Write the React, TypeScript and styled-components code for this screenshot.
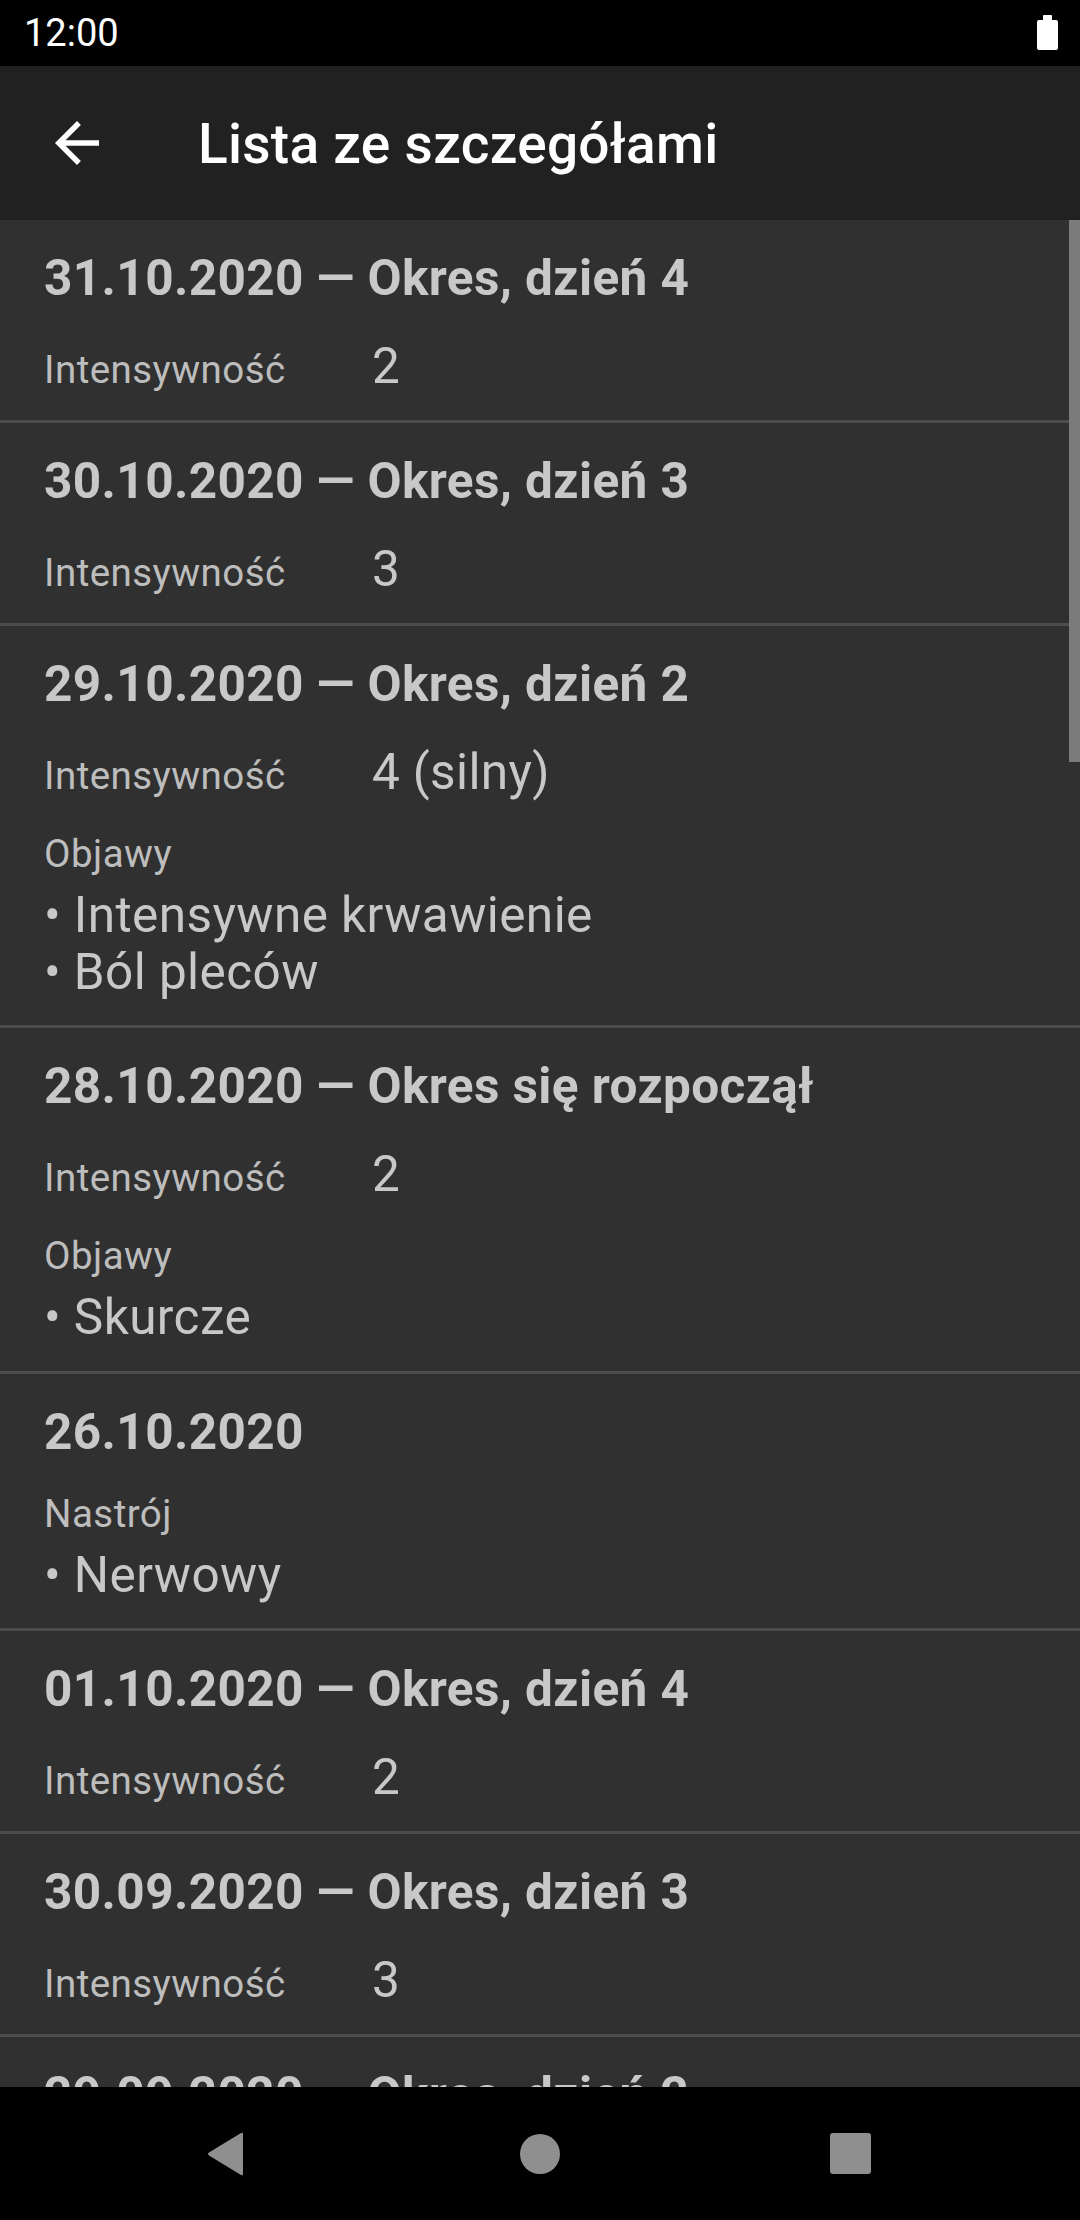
import React from "react";
import styled, { createGlobalStyle } from "styled-components";

const Global = createGlobalStyle`
  html, body { margin: 0; padding: 0; background: #000; }
  body { font-family: Roboto, "Noto Sans", sans-serif; }
  * { box-sizing: border-box; }
`;

const Screen = styled.div`
  width: 1080px;
  height: 2220px;
  display: flex;
  flex-direction: column;
  background: #303030;
  overflow: hidden;
`;

const StatusBar = styled.div`
  height: 66px;
  flex: none;
  background: #000;
  display: flex;
  align-items: center;
  justify-content: space-between;
  padding: 0 22px 0 24px;
  color: #fff;
  font-size: 38px;
  font-family: Roboto, sans-serif;
`;

const Battery = styled.div`
  position: relative;
  width: 21px;
  height: 30px;
  margin-top: 4px;
  background: #fff;
  border-radius: 2px;
  &::before {
    content: "";
    position: absolute;
    top: -5px;
    left: 6px;
    width: 9px;
    height: 5px;
    background: #fff;
    border-radius: 1px 1px 0 0;
  }
`;

const Toolbar = styled.div`
  height: 154px;
  flex: none;
  background: #212121;
  display: flex;
  align-items: center;
  padding-left: 44px;
  gap: 88px;
`;

const ToolbarTitle = styled.h1`
  margin: 0;
  font-family: Roboto, sans-serif;
  font-weight: 500;
  font-size: 55px;
  letter-spacing: 0.28px;
  color: #fff;
  line-height: 64px;
  padding-top: 2px;
`;

const List = styled.div`
  position: relative;
  flex: 1;
  min-height: 0;
  overflow: hidden;
`;

const ScrollThumb = styled.div`
  position: absolute;
  top: 0;
  right: 0;
  width: 11px;
  height: 542px;
  background: #7b7b7b;
`;

const Item = styled.div`
  display: flex;
  flex-direction: column;
  gap: 30px;
  padding: 29px 44px 25px 44px;
  border-bottom: 3px solid #4d4d4d;
`;

const ItemTitle = styled.div`
  font-family: Roboto, sans-serif;
  font-weight: 700;
  font-size: 49.5px;
  letter-spacing: 0.4px;
  line-height: 58px;
  color: #c8c8c8;
  white-space: nowrap;
`;

const Row = styled.div`
  display: flex;
  align-items: baseline;
`;

const Label = styled.div<{ $width?: number }>`
  font-family: Roboto, sans-serif;
  font-size: 38.5px;
  letter-spacing: 0.45px;
  line-height: 45px;
  color: #bdbdbd;
  ${(p) => (p.$width ? `width: ${p.$width}px; flex: none;` : "")}
`;

const Value = styled.div`
  font-family: Roboto, sans-serif;
  font-size: 49.5px;
  letter-spacing: 0.35px;
  line-height: 58px;
  color: #c8c8c8;
`;

const Section = styled.div`
  display: flex;
  flex-direction: column;
`;

const Bullets = styled.ul`
  list-style: none;
  margin: 11px 0 0 0;
  padding: 0;
`;

const Bullet = styled.li`
  font-family: Roboto, sans-serif;
  font-size: 49.5px;
  letter-spacing: 0.42px;
  line-height: 56.5px;
  color: #c8c8c8;
`;

const NavBar = styled.div`
  height: 133px;
  flex: none;
  background: #000;
  display: flex;
  align-items: center;
  justify-content: center;
`;

const NavSlot = styled.div<{ $shift?: number }>`
  width: 310px;
  display: flex;
  justify-content: center;
  align-items: center;
  padding-right: ${(p) => p.$shift ?? 0}px;
`;

const BackArrow = () => (
  <svg width="66" height="66" viewBox="0 0 24 24" fill="#fff">
    <path d="M20 11H7.83l5.59-5.59L12 4l-8 8 8 8 1.41-1.41L7.83 13H20v-2z" />
  </svg>
);

type Entry = {
  title: string;
  intensity?: string;
  sections?: { label: string; items: string[] }[];
};

const entries: Entry[] = [
  { title: "31.10.2020 — Okres, dzień 4", intensity: "2" },
  { title: "30.10.2020 — Okres, dzień 3", intensity: "3" },
  {
    title: "29.10.2020 — Okres, dzień 2",
    intensity: "4 (silny)",
    sections: [{ label: "Objawy", items: ["Intensywne krwawienie", "Ból pleców"] }],
  },
  {
    title: "28.10.2020 — Okres się rozpoczął",
    intensity: "2",
    sections: [{ label: "Objawy", items: ["Skurcze"] }],
  },
  {
    title: "26.10.2020",
    sections: [{ label: "Nastrój", items: ["Nerwowy"] }],
  },
  { title: "01.10.2020 — Okres, dzień 4", intensity: "2" },
  { title: "30.09.2020 — Okres, dzień 3", intensity: "3" },
  { title: "29.09.2020 — Okres, dzień 2", intensity: "2" },
];

export default function App() {
  return (
    <>
      <Global />
      <Screen>
        <StatusBar>
          <span>12:00</span>
          <Battery />
        </StatusBar>
        <Toolbar>
          <BackArrow />
          <ToolbarTitle>Lista ze szczegółami</ToolbarTitle>
        </Toolbar>
        <List>
          {entries.map((e, i) => (
            <Item key={i}>
              <ItemTitle>{e.title}</ItemTitle>
              {e.intensity && (
                <Row>
                  <Label $width={328}>Intensywność</Label>
                  <Value>{e.intensity}</Value>
                </Row>
              )}
              {e.sections?.map((s, j) => (
                <Section key={j}>
                  <Label>{s.label}</Label>
                  <Bullets>
                    {s.items.map((it, k) => (
                      <Bullet key={k}>• {it}</Bullet>
                    ))}
                  </Bullets>
                </Section>
              ))}
            </Item>
          ))}
          <ScrollThumb />
        </List>
        <NavBar>
          <NavSlot $shift={8}>
            <svg width="40" height="46" viewBox="0 0 40 46">
              <path
                d="M37 3 L37 43 Q37 45 35 44 L3 24.5 Q1 23 3 21.5 L35 2 Q37 1 37 3 Z"
                fill="#8f8f8f"
              />
            </svg>
          </NavSlot>
          <NavSlot>
            <svg width="40" height="40" viewBox="0 0 40 40">
              <circle cx="20" cy="20" r="20" fill="#8f8f8f" />
            </svg>
          </NavSlot>
          <NavSlot>
            <svg width="41" height="41" viewBox="0 0 41 41">
              <rect x="0" y="0" width="41" height="41" rx="3" fill="#8f8f8f" />
            </svg>
          </NavSlot>
        </NavBar>
      </Screen>
    </>
  );
}
